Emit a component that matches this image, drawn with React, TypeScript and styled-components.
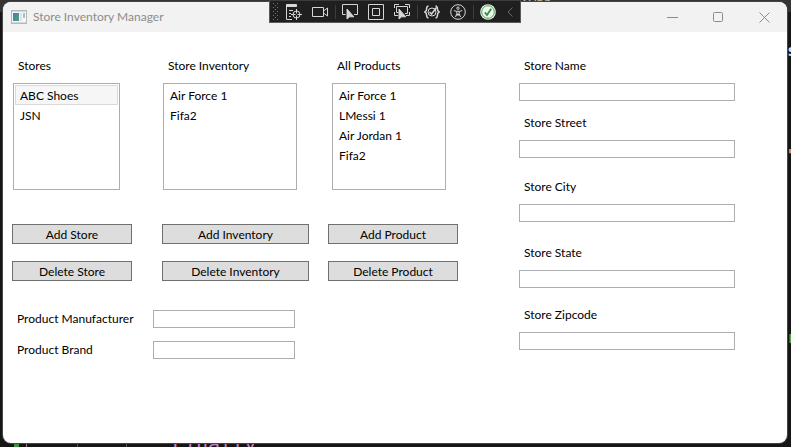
import React, { useState } from "react";
import styled, { createGlobalStyle } from "styled-components";

const GlobalStyle = createGlobalStyle`
  * { box-sizing: border-box; }
  body { margin: 0; background: #1b1b1b; }
  body, button, input { font-family: Lato, "Open Sans", sans-serif; font-size: 12px; }
`;

const Desktop = styled.div`
  position: relative;
  display: flex;
  min-height: 100vh;
  padding: 2px 4px 4px 3px;
  overflow: hidden;
  background: linear-gradient(#343434 0 12px, #161616 12px 100%);
`;

const CodeText = styled.span<{ $color: string; $size: number }>`
  position: absolute;
  font-family: "DejaVu Sans Mono", monospace;
  font-size: ${(p) => p.$size}px;
  line-height: 20px;
  white-space: pre;
  color: ${(p) => p.$color};
`;

const TopCode = styled(CodeText)`
  top: -13px;
  left: 411px;
`;

const BottomCode = styled(CodeText)`
  bottom: -7px;
  left: 172px;
`;

const EdgeCode = styled(CodeText)<{ $top: number }>`
  top: ${(p) => p.$top}px;
  right: -6px;
  font-weight: 700;
`;

const GuideLines = styled.div`
  position: absolute;
  bottom: 0;
  left: 14px;
  display: flex;
  height: 4px;
`;

const Guide = styled.i<{ $width: number; $color: string; $gap: number }>`
  width: ${(p) => p.$width}px;
  margin-right: ${(p) => p.$gap}px;
  background: ${(p) => p.$color};
`;

const Window = styled.main`
  position: relative;
  flex: 1;
  display: flex;
  flex-direction: column;
  border-radius: 8px;
  overflow: hidden;
  background: #ffffff;
  color: #000000;
  box-shadow: 0 0 0 1px #454545;
`;

const TitleBar = styled.header`
  display: flex;
  align-items: center;
  height: 30px;
  padding-left: 8px;
  background: #f2f2f2;
  color: #8c8c8c;
`;

const Title = styled.h1`
  flex: 1;
  margin: 0 0 0 6px;
  font-size: 12px;
  font-weight: 400;
  line-height: 18px;
`;

const CaptionButton = styled.button`
  display: grid;
  place-items: center;
  width: 46px;
  height: 30px;
  padding: 0;
  border: 0;
  background: none;
  color: #8c8c8c;
`;

const Content = styled.div`
  display: grid;
  grid-template-columns: 507fr 216fr;
  align-items: start;
  padding: 25px 52px 24px 9px;
`;

const Columns = styled.div`
  display: grid;
  grid-template-columns: 150fr 166fr 191fr;
`;

const ListPanel = styled.section<{ $start: number; $end: number }>`
  margin: 0 ${(p) => p.$end}px 0 ${(p) => p.$start}px;
`;

const Caption = styled.h2`
  margin: 0 0 8px 5px;
  font-size: 12px;
  font-weight: 400;
  line-height: 18px;
`;

const ListBox = styled.ul`
  height: 107px;
  margin: 0;
  padding: 1px;
  border: 1px solid #abadb3;
  list-style: none;
  overflow: auto;
`;

const ListItem = styled.button<{ $selected: boolean }>`
  display: block;
  width: 100%;
  height: 20px;
  padding: 1px 4px 0;
  border: 1px solid ${(p) => (p.$selected ? "#dadada" : "transparent")};
  background: ${(p) => (p.$selected ? "#f6f6f6" : "transparent")};
  color: inherit;
  line-height: 17px;
  text-align: left;
`;

const Actions = styled.div<{ $end: number }>`
  display: grid;
  gap: 17px;
  margin: 34px ${(p) => p.$end}px 0 0;
`;

const ActionButton = styled.button`
  height: 20px;
  padding: 1px 0 0;
  border: 1px solid #707070;
  background: #dddddd;
  color: inherit;
  line-height: 17px;
`;

const ProductForm = styled.form`
  display: grid;
  grid-template-columns: 136px 142px;
  gap: 13px 0;
  align-items: center;
  margin: 29px 0 0 5px;
`;

const FieldLabel = styled.label`
  line-height: 18px;
`;

const TextBox = styled.input`
  width: 100%;
  height: 18px;
  padding: 0 2px;
  border: 1px solid #abadb3;
  background: #ffffff;
  color: inherit;
`;

const StoreField = styled.div<{ $before: number }>`
  display: grid;
  gap: 8px;
  margin-top: ${(p) => p.$before}px;

  ${FieldLabel} {
    padding-left: 5px;
  }
`;

const ToolbarLayer = styled.div`
  position: absolute;
  top: 0;
  left: 0;
  right: 0;
  display: flex;
  justify-content: center;
  padding-right: 2px;
  pointer-events: none;
`;

const Toolbar = styled.div`
  display: flex;
  align-items: center;
  height: 23px;
  padding: 0 1px 0 3px;
  border: 1px solid #5a5a5a;
  border-top-color: #3c3c3c;
  background: #1f1f1f;
  color: #d6d6d6;
  pointer-events: auto;
`;

const ToolButton = styled.button`
  display: grid;
  place-items: center;
  width: 26px;
  height: 21px;
  padding: 0;
  border: 0;
  background: none;
  color: inherit;
`;

const CollapseButton = styled(ToolButton)`
  width: 18px;
  color: #6a6a6a;
`;

const Separator = styled.i`
  width: 1px;
  height: 14px;
  margin: 0 1px 0 2px;
  background: #3d3d3d;
`;

const Svg = ({ size = 16, children }: { size?: number; children: React.ReactNode }) => (
  <svg width={size} height={size} viewBox={`0 0 ${size} ${size}`} fill="none" stroke="currentColor" aria-hidden="true">
    {children}
  </svg>
);

const AppIcon = () => (
  <svg width="16" height="14" viewBox="0 0 16 14" aria-hidden="true">
    <defs>
      <linearGradient id="pane" x1="0" y1="0" x2="1" y2="1">
        <stop offset="0" stopColor="#4a78b4" />
        <stop offset="1" stopColor="#4fa37e" />
      </linearGradient>
    </defs>
    <rect x="0.5" y="0.5" width="15" height="13" fill="#f4f6f7" stroke="#b4b8bc" />
    <path d="M1 1.5H15" stroke="#d4d8dc" />
    <rect x="2" y="3" width="6" height="8" fill="url(#pane)" />
    <rect x="9" y="3" width="2" height="8" fill="#dde3e8" />
    <rect x="12" y="3" width="2" height="5" fill="#9fc8bd" />
    <path d="M1 12.5H15" stroke="#d4d8dc" />
  </svg>
);

const Grip = () => (
  <svg width="8" height="18" viewBox="0 0 8 18" fill="#777777" aria-hidden="true">
    {[0, 4, 8, 12, 16].map((y) => (
      <React.Fragment key={y}>
        <rect x="0" y={y} width="1" height="1" />
        <rect x="4" y={y} width="1" height="1" />
        {y < 16 && <rect x="2" y={y + 2} width="1" height="1" />}
      </React.Fragment>
    ))}
  </svg>
);

const pointer = "M0 0V10L2.6 7.8H6.8Z";

const LiveTreeIcon = () => (
  <Svg>
    <path d="M0.5 0.5H10.5V2.5H0.5Z" fill="currentColor" />
    <path d="M0.5 2V15.5H6M3 6.5H7M3 9.5H5M3 12.5H5" />
    <circle cx="10.5" cy="10.5" r="3.5" />
    <path d="M10.5 5V9.5M10.5 11.5V16M5 10.5H9.5M11.5 10.5H16" />
  </Svg>
);

const CameraIcon = () => (
  <Svg>
    <path d="M0.5 3.5H11.5V12.5H0.5ZM11.5 7L15.5 4V12L11.5 9" />
  </Svg>
);

const SelectIcon = () => (
  <Svg>
    <path d="M3.5 10.5H0.5V0.5H15.5V10.5H12" />
    <path d={pointer} transform="translate(5 5)" fill="currentColor" />
  </Svg>
);

const AdornersIcon = () => (
  <Svg>
    <path d="M0.5 0.5H15.5V15.5H0.5Z" />
    <path d="M4.5 4.5H11.5V11.5H4.5Z" />
  </Svg>
);

const TrackIcon = () => (
  <Svg>
    <path d="M0.5 4V0.5H5M11 0.5H15.5V4M0.5 8V11.5H4M15.5 8V11.5H12M4.5 8.5H2.5V2.5H13.5V9.5H11" />
    <path d={pointer} transform="translate(5 5)" fill="currentColor" />
  </Svg>
);

const BindingIcon = () => (
  <Svg>
    <path d="M4.5 2C2 2 2.8 5 2.3 6.5L0.8 8L2.3 9.5C2.8 11 2 14 4.5 14M11.5 2C14 2 13.2 5 13.7 6.5L15.2 8L13.7 9.5C13.2 11 14 14 11.5 14" strokeWidth="1.5" />
    <circle cx="8" cy="8" r="4" />
    <path d="M5.5 8L7.5 10L12.5 3.5" strokeWidth="1.5" />
  </Svg>
);

const AccessibilityIcon = () => (
  <Svg>
    <circle cx="8" cy="8" r="7.3" />
    <circle cx="8" cy="4.2" r="1.2" />
    <path d="M3.8 6.5L6.8 7.5V9.5L5.5 13M12.2 6.5L9.2 7.5V9.5L10.5 13M6.8 7.3H9.2M8 9.5L6.8 12M8 9.5L9.2 12" />
  </Svg>
);

const ReloadIcon = () => (
  <Svg>
    <circle cx="8" cy="8" r="7.8" fill="#f0f6f0" stroke="none" />
    <circle cx="8" cy="8" r="6.3" stroke="#43a047" />
    <path d="M4.8 8.4L7 11L11.2 4.8" stroke="#2e9138" strokeWidth="1.8" />
  </Svg>
);

const tools = [
  [
    { label: "Go to Live Visual Tree", Icon: LiveTreeIcon },
    { label: "Show in XAML Live Preview", Icon: CameraIcon },
  ],
  [
    { label: "Select Element", Icon: SelectIcon },
    { label: "Display Layout Adorners", Icon: AdornersIcon },
    { label: "Track Focused Element", Icon: TrackIcon },
  ],
  [
    { label: "Binding Failures", Icon: BindingIcon },
    { label: "Scan for Accessibility Issues", Icon: AccessibilityIcon },
  ],
  [{ label: "Hot Reload", Icon: ReloadIcon }],
];

const panels = [
  { title: "Stores", noun: "Store", items: ["ABC Shoes", "JSN"], start: 1, end: 42, buttonEnd: 30 },
  { title: "Store Inventory", noun: "Inventory", items: ["Air Force 1", "Fifa2"], start: 1, end: 31, buttonEnd: 19 },
  {
    title: "All Products",
    noun: "Product",
    items: ["Air Force 1", "LMessi 1", "Air Jordan 1", "Fifa2"],
    start: 4,
    end: 73,
    buttonEnd: 61,
  },
];

const productFields = [
  { id: "manufacturer", label: "Product Manufacturer" },
  { id: "brand", label: "Product Brand" },
];

const storeFields = [
  { id: "name", label: "Store Name", before: 0 },
  { id: "street", label: "Store Street", before: 13 },
  { id: "city", label: "Store City", before: 20 },
  { id: "state", label: "Store State", before: 22 },
  { id: "zipcode", label: "Store Zipcode", before: 18 },
];

export default function App() {
  const [selected, setSelected] = useState<Record<string, string>>({ Stores: "ABC Shoes" });

  return (
    <Desktop>
      <GlobalStyle />
      <div aria-hidden="true">
        <TopCode $color="#b8b8a0" $size={13}>System.Windows.App</TopCode>
        <GuideLines>
          <Guide $width={5} $gap={7} $color="#3f9142" />
          <Guide $width={1} $gap={50} $color="#8a8a8a" />
          <Guide $width={1} $gap={48} $color="#555555" />
          <Guide $width={1} $gap={0} $color="#555555" />
        </GuideLines>
        <BottomCode $color="#c586c0" $size={20}>Finally</BottomCode>
        <EdgeCode $color="#dcdcdc" $size={16} $top={41}>s</EdgeCode>
        <EdgeCode $color="#d69d85" $size={16} $top={146}>"</EdgeCode>
        <EdgeCode $color="#57a64a" $size={16} $top={328}>r</EdgeCode>
      </div>

      <Window>
        <TitleBar>
          <AppIcon />
          <Title>Store Inventory Manager</Title>
          <CaptionButton type="button" aria-label="Minimize">
            <Svg size={11}><path d="M0 5.5H11" /></Svg>
          </CaptionButton>
          <CaptionButton type="button" aria-label="Maximize">
            <Svg size={11}><rect x="0.5" y="0.5" width="9" height="9" rx="1" /></Svg>
          </CaptionButton>
          <CaptionButton type="button" aria-label="Close">
            <Svg size={11}><path d="M0.5 0.5L10.5 10.5M10.5 0.5L0.5 10.5" /></Svg>
          </CaptionButton>
        </TitleBar>

        <Content>
          <div>
            <Columns>
              {panels.map((panel) => (
                <div key={panel.title}>
                  <ListPanel $start={panel.start} $end={panel.end}>
                    <Caption>{panel.title}</Caption>
                    <ListBox aria-label={panel.title}>
                      {panel.items.map((item) => (
                        <li key={item}>
                          <ListItem
                            type="button"
                            aria-pressed={selected[panel.title] === item}
                            $selected={selected[panel.title] === item}
                            onClick={() => setSelected({ ...selected, [panel.title]: item })}
                          >
                            {item}
                          </ListItem>
                        </li>
                      ))}
                    </ListBox>
                  </ListPanel>
                  <Actions $end={panel.buttonEnd}>
                    <ActionButton type="button">Add {panel.noun}</ActionButton>
                    <ActionButton type="button">Delete {panel.noun}</ActionButton>
                  </Actions>
                </div>
              ))}
            </Columns>
            <ProductForm>
              {productFields.map(({ id, label }) => (
                <React.Fragment key={id}>
                  <FieldLabel htmlFor={id}>{label}</FieldLabel>
                  <TextBox id={id} type="text" />
                </React.Fragment>
              ))}
            </ProductForm>
          </div>
          <form>
            {storeFields.map(({ id, label, before }) => (
              <StoreField key={id} $before={before}>
                <FieldLabel htmlFor={id}>{label}</FieldLabel>
                <TextBox id={id} type="text" />
              </StoreField>
            ))}
          </form>
        </Content>
      </Window>

      <ToolbarLayer>
        <Toolbar role="toolbar" aria-label="Debug tools">
          <Grip />
          {tools.map((group, index) => (
            <React.Fragment key={index}>
              {index > 0 && <Separator />}
              {group.map(({ label, Icon }) => (
                <ToolButton key={label} type="button" aria-label={label}>
                  <Icon />
                </ToolButton>
              ))}
            </React.Fragment>
          ))}
          <CollapseButton type="button" aria-label="Collapse toolbar">
            <Svg size={10}><path d="M7.5 0.5L3 5L7.5 9.5" /></Svg>
          </CollapseButton>
        </Toolbar>
      </ToolbarLayer>
    </Desktop>
  );
}
